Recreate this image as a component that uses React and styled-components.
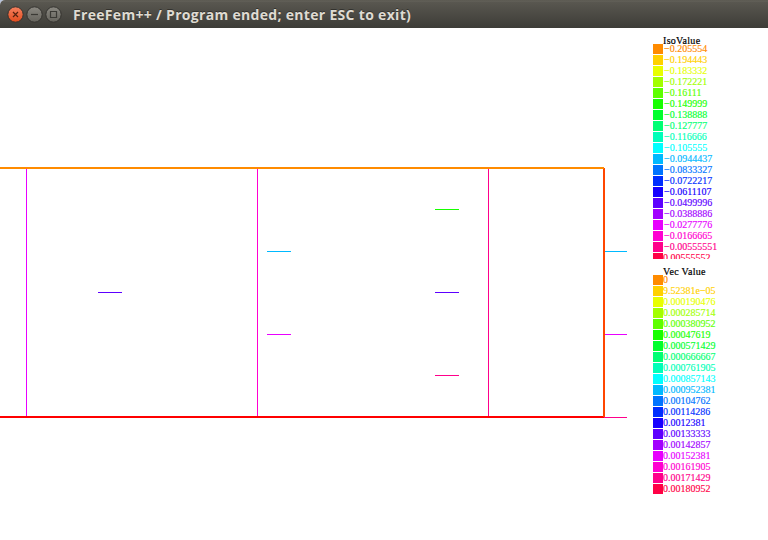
import React from "react";
import styled, { createGlobalStyle } from "styled-components";

const hue = (n) => `hsl(${(n * 360) / 22}, 100%, 50%)`;

const GlobalStyle = createGlobalStyle`
  body { margin: 0; background: #fff; overflow: hidden; }
`;

const Window = styled.div`
  display: flex;
  flex-direction: column;
  width: 768px;
  height: 540px;
  background: #fff;
`;

const TitleBar = styled.header`
  display: flex;
  align-items: center;
  box-sizing: border-box;
  flex: none;
  height: 28px;
  padding: 1px 0 0 7px;
  border-radius: 5px 0 0 0;
  background: linear-gradient(#55534b 0, #66645c 1px, #595750 2px, #3d3c37 28px);
  box-shadow: -4px -4px 0 4px #b8c4dc;
`;

const Controls = styled.div`
  display: flex;
  gap: 2px;
`;

const ControlIcon = styled.svg`
  display: block;
  width: 17px;
  height: 17px;
`;

const Title = styled.h1`
  margin: 0 0 0 11px;
  font: 700 14px/24px "Open Sans", "Noto Sans", sans-serif;
  letter-spacing: 0.31px;
  color: #dfdbd2;
  white-space: pre;
  text-shadow: 0 -1px 0 #33322e;
`;

const Content = styled.main`
  display: flex;
  flex: 1;
  min-height: 0;
`;

const Plot = styled.svg`
  display: block;
  flex: none;
  width: 653px;
  height: 512px;
  shape-rendering: crispEdges;
`;

const Legends = styled.aside`
  display: flex;
  flex-direction: column;
  gap: 7px;
  width: 115px;
  padding-top: 7px;
`;

const Legend = styled.section`
  height: ${(p) => p.$height}px;
  overflow: hidden;
  font: 10px/11px "Liberation Serif", serif;
`;

const LegendTitle = styled.h2`
  height: 9px;
  margin: 0 0 0 10px;
  font: inherit;
  letter-spacing: 0.3px;
  -webkit-text-stroke: 0.2px currentColor;
  color: #000;
`;

const Entry = styled.div`
  display: flex;
  height: 11px;
  color: ${(p) => p.$color};
`;

const Swatch = styled.span`
  width: 10px;
  height: 10px;
  background: currentColor;
`;

const Value = styled.span`
  display: block;
  height: 11px;
  padding-left: ${(p) => (p.$negative ? 1 : 0)}px;
  line-height: 10px;
  -webkit-text-stroke: 0.15px currentColor;
  white-space: nowrap;
`;

const isoValues = [
  "−0.205554", "−0.194443", "−0.183332", "−0.172221", "−0.16111",
  "−0.149999", "−0.138888", "−0.127777", "−0.116666", "−0.105555",
  "−0.0944437", "−0.0833327", "−0.0722217", "−0.0611107", "−0.0499996",
  "−0.0388886", "−0.0277776", "−0.0166665", "−0.00555551", "0.00555552",
];

const vecValues = [
  "0", "9.52381e−05", "0.000190476", "0.000285714", "0.000380952",
  "0.00047619", "0.000571429", "0.000666667", "0.000761905", "0.000857143",
  "0.000952381", "0.00104762", "0.00114286", "0.0012381", "0.00133333",
  "0.00142857", "0.00152381", "0.00161905", "0.00171429", "0.00180952",
];

// x, y, width, height, colour index
const segments = [
  [26, 141, 1, 247, 18],
  [257, 141, 1, 247, 19],
  [488, 141, 1, 247, 20],
  [98, 264, 24, 1, 16],
  [267, 223, 24, 1, 12],
  [267, 306, 24, 1, 18],
  [435, 181, 24, 1, 7],
  [435, 264, 24, 1, 16],
  [435, 347, 24, 1, 20],
  [605, 223, 22, 1, 12],
  [605, 306, 22, 1, 18],
  [604, 389, 23, 1, 20],
  [0, 388, 604, 2, 0],
  [603, 140, 2, 249, 1],
  [0, 139, 604, 2, 2],
];

function WindowControl({ close, children }) {
  const id = close ? "closeFill" : "plainFill";
  return (
    <ControlIcon viewBox="0 0 17 17">
      <defs>
        <linearGradient id={id} x1="0" y1="0" x2="0" y2="1">
          <stop offset="0" stopColor={close ? "#f58160" : "#8b8982"} />
          <stop offset="1" stopColor={close ? "#e24c1d" : "#65635c"} />
        </linearGradient>
      </defs>
      <circle cx="8.5" cy="8.5" r="7.7" fill={`url(#${id})`} stroke="#34332f" strokeWidth="1" />
      <g fill="none" stroke={close ? "#55220f" : "#3b3a35"} strokeWidth="1.2">{children}</g>
    </ControlIcon>
  );
}

function ValueLegend({ title, values, height }) {
  return (
    <Legend $height={height}>
      <LegendTitle>{title}</LegendTitle>
      {values.map((value, i) => (
        <Entry key={value} $color={hue(i + 2)}>
          <Swatch />
          <Value $negative={value.startsWith("−")}>{value}</Value>
        </Entry>
      ))}
    </Legend>
  );
}

export default function App() {
  return (
    <Window>
      <GlobalStyle />
      <TitleBar>
        <Controls>
          <WindowControl close><path d="M6 6l5 5M11 6l-5 5" /></WindowControl>
          <WindowControl><path d="M5 8.5h7" /></WindowControl>
          <WindowControl><path d="M5.5 5.5h6v6h-6z" /></WindowControl>
        </Controls>
        <Title>FreeFem++ / Program ended; enter ESC to exit)</Title>
      </TitleBar>
      <Content>
        <Plot viewBox="0 0 653 512">
          {segments.map(([x, y, width, height, color]) => (
            <rect key={`${x}-${y}`} x={x} y={y} width={width} height={height} fill={hue(color)} />
          ))}
        </Plot>
        <Legends>
          <ValueLegend title="IsoValue" values={isoValues} height={224} />
          <ValueLegend title="Vec Value" values={vecValues} height={230} />
        </Legends>
      </Content>
    </Window>
  );
}
